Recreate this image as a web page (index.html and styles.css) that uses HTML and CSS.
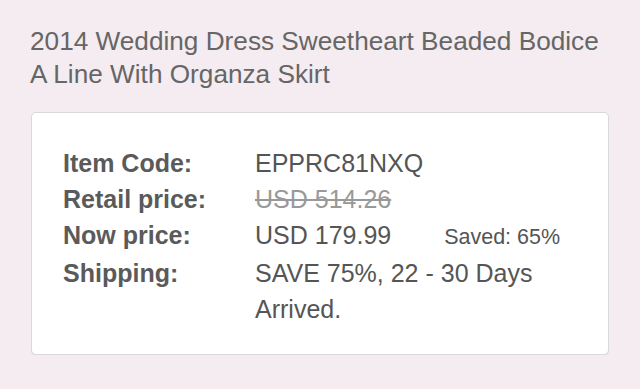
FILE: index.html
```html
<!DOCTYPE html>
<html lang="en">
  <head>
    <meta charset="UTF-8" />
    <meta name="viewport" content="width=device-width, initial-scale=1.0" />
    <title>2014 Wedding Dress Sweetheart Beaded Bodice</title>
    <link rel="stylesheet" href="styles.css">
  </head>
  <body>
    <h1 class="product-title">2014 Wedding Dress Sweetheart Beaded Bodice A Line With Organza Skirt</h1>
    <div class="info-card">
      <dl class="info-list">
        <dt>Item Code:</dt>
        <dd>EPPRC81NXQ</dd>
        <dt>Retail price:</dt>
        <dd><del class="old-price">USD 514.26</del></dd>
        <dt>Now price:</dt>
        <dd>USD 179.99 <span class="saved">Saved: 65%</span></dd>
        <dt>Shipping:</dt>
        <dd>SAVE 75%, 22 - 30 Days Arrived.</dd>
      </dl>
    </div>
  </body>
</html>
```

FILE: styles.css
```css
*, *:before, *:after {
  box-sizing: border-box;
}
body {
  margin: 0;
  padding: 25px 0 0;
  background-color: #f4ecf0;
  font-family: "Liberation Sans", Arial, sans-serif;
  color: #555;
}
.product-title {
  margin: 0 26px 21px 30px;
  font-size: 26.2px;
  font-weight: normal;
  line-height: 33px;
  color: #666;
}
.info-card {
  margin: 0 31px;
  padding: 32px 31px 27px;
  background-color: #fff;
  border: 1px solid #d9d9d9;
  border-radius: 5px;
  box-shadow: 0 1px 1px rgba(0, 0, 0, .06);
}
.info-list {
  display: grid;
  grid-template-columns: 192px 1fr;
  margin: 0;
  font-size: 25px;
  line-height: 36px;
}
.info-list dt {
  font-weight: bold;
  color: #5a5a5a;
}
.info-list dd {
  margin: 0;
}
.old-price {
  color: #999;
}
.saved {
  margin-left: 46px;
  font-size: 21.5px;
}
```
